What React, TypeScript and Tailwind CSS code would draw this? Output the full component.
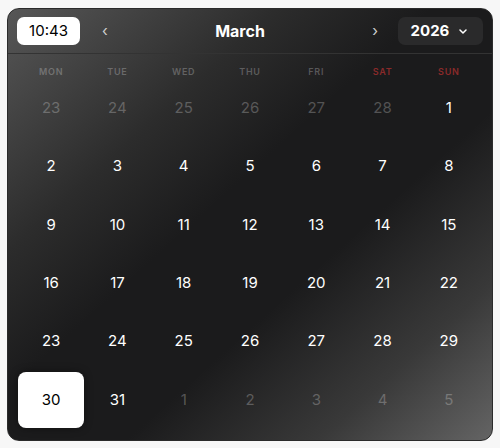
import React from 'react';

const weekdays = ['MON', 'TUE', 'WED', 'THU', 'FRI', 'SAT', 'SUN'];

type Day = { n: number; muted?: boolean; selected?: boolean };

const days: Day[] = [
  ...[23, 24, 25, 26, 27, 28].map((n) => ({ n, muted: true })),
  ...Array.from({ length: 31 }, (_, i) => ({ n: i + 1, selected: i + 1 === 30 })),
  ...[1, 2, 3, 4, 5].map((n) => ({ n, muted: true })),
];

export default function App() {
  return (
    <div className="min-h-screen bg-[#f7f7f7] pl-[7px] pr-[7px] pt-[8px] font-['Inter','Noto_Sans',sans-serif]">
      <div className="h-[433px] overflow-hidden rounded-[12px] border border-[#2b2b2b] bg-[linear-gradient(138deg,#575757_0%,#2c2c2c_28%,#1b1b1c_44%,#1b1b1c_62%,#393939_82%,#646464_100%)]">
        {/* header */}
        <div className="flex items-center border-b border-[#333] px-[9px] py-[8px]">
          <div className="flex h-[28px] w-[63px] items-center justify-center rounded-[7px] bg-white text-[15px] text-black">
            10:43
          </div>
          <div className="flex flex-1 items-center justify-between pl-[22px] pr-[20px] text-white">
            <button className="text-[15px] text-[#cfcfcf]">‹</button>
            <span className="text-[16px] font-bold">March</span>
            <button className="text-[15px] text-[#cfcfcf]">›</button>
          </div>
          <button className="flex h-[28px] w-[85px] items-center justify-center gap-[10px] rounded-[7px] bg-[#2a2a2b] pr-[3px] text-[15px] font-bold text-white">
            2026
            <svg width="8" height="5" viewBox="0 0 8 5" fill="none">
              <path d="M1 1l3 3 3-3" stroke="white" strokeWidth="1.5" strokeLinecap="round" strokeLinejoin="round" />
            </svg>
          </button>
        </div>

        {/* weekdays */}
        <div className="grid grid-cols-7 px-[10px] pt-[12px]">
          {weekdays.map((w, i) => (
            <div
              key={w}
              className={`text-center text-[9px] font-semibold tracking-[0.08em] leading-[12px] ${i >= 5 ? 'text-[#8a2a2a]' : 'text-white/25'}`}
            >
              {w}
            </div>
          ))}
        </div>

        {/* days */}
        <div className="mt-[2px] grid grid-cols-7 gap-y-[2.4px] px-[10px]">
          {days.map((d, i) => (
            <div
              key={i}
              className={`flex h-[56px] items-center justify-center rounded-[8px] text-[15px] ${
                d.selected
                  ? 'bg-white text-black shadow-[0_0_8px_rgba(0,0,0,0.4)]'
                  : d.muted
                  ? 'text-white/25'
                  : 'text-white'
              }`}
            >
              {d.n}
            </div>
          ))}
        </div>
      </div>
    </div>
  );
}
